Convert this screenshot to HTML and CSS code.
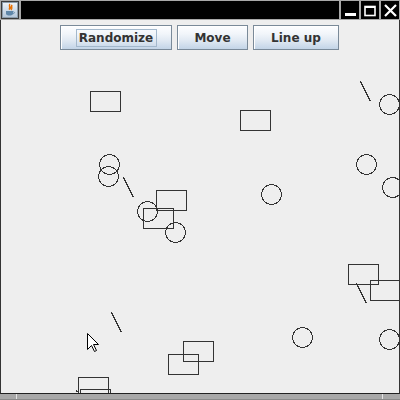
FILE: index.html
```html
<!DOCTYPE html>
<html>
<head>
<meta charset="utf-8">
<link rel="stylesheet" href="styles.css">
</head>
<body>
<div class="window">
  <div class="titlebar">
    <div class="cell icon-cell">
      <svg width="18" height="18" viewBox="0 0 18 18">
        <defs>
          <linearGradient id="tile" x1="0" y1="0" x2="0" y2="1">
            <stop offset="0" stop-color="#eef3f8"/>
            <stop offset="1" stop-color="#b3c6da"/>
          </linearGradient>
        </defs>
        <rect x="1.5" y="1.5" width="15" height="15" fill="url(#tile)" stroke="#8c9cab"/>
        <path d="M9 3 C7 5 10 6 8 8.5 C11 7 9 5.5 11 4 C10 6 12 6.5 10 9" fill="none" stroke="#e76f00" stroke-width="1.3"/>
        <path d="M5 10 H12 V12.5 C12 14 10.5 14.5 8.5 14.5 C6.5 14.5 5 14 5 12.5 Z" fill="#5f86a8"/>
        <path d="M12 10.8 C14 10.8 14 12.6 12 12.6" fill="none" stroke="#5f86a8" stroke-width="0.9"/>
      </svg>
    </div>
    <div class="cell title-cell"></div>
    <div class="cell ctrl">
      <svg width="18" height="18" viewBox="0 0 18 18"><rect x="4" y="12" width="11" height="3" fill="#fff"/></svg>
    </div>
    <div class="cell ctrl">
      <svg width="18" height="18" viewBox="0 0 18 18"><rect x="4" y="5.5" width="10" height="9" fill="none" stroke="#fff" stroke-width="1.6"/><rect x="4" y="5" width="10" height="2" fill="#fff"/></svg>
    </div>
    <div class="cell ctrl">
      <svg width="18" height="18" viewBox="0 0 18 18"><path d="M4 4 L15 15 M15 4 L4 15" stroke="#fff" stroke-width="2.2"/></svg>
    </div>
  </div>
  <div class="frame">
    <div class="toolbar">
      <button class="btn btn-random"><span class="focus">Randomize</span></button>
      <button class="btn btn-move">Move</button>
      <button class="btn btn-line">Line up</button>
    </div>
    <svg class="canvas" width="398" height="338" viewBox="1 55 398 338">
      <g fill="none" stroke="#333" stroke-width="1" shape-rendering="crispEdges">
        <rect x="90.5" y="91.5" width="30" height="20"/>
        <rect x="240.5" y="110.5" width="30" height="20"/>
        <rect x="156.5" y="190.5" width="30" height="20"/>
        <rect x="143.5" y="208.5" width="30" height="20"/>
        <rect x="348.5" y="264.5" width="30" height="20"/>
        <rect x="370.5" y="280.5" width="30" height="20"/>
        <rect x="183.5" y="341.5" width="30" height="20"/>
        <rect x="168.5" y="354.5" width="30" height="20"/>
        <rect x="78.5" y="377.5" width="30" height="20"/>
        <rect x="80.5" y="389.5" width="30" height="20"/>

        <circle cx="109.5" cy="164.5" r="10"/>
        <circle cx="108.5" cy="176.5" r="10"/>
        <circle cx="147.5" cy="211.5" r="10"/>
        <circle cx="175.5" cy="232.5" r="10"/>
        <circle cx="389.5" cy="104.5" r="10"/>
        <circle cx="366.5" cy="164.5" r="10"/>
        <circle cx="392.5" cy="187.5" r="10"/>
        <circle cx="271.5" cy="194.5" r="10"/>
        <circle cx="302.5" cy="337.5" r="10"/>
        <circle cx="389.5" cy="339.5" r="10"/>

        <line x1="123.5" y1="177.5" x2="133.5" y2="197.5"/>
        <line x1="360.5" y1="81.5" x2="370.5" y2="101.5"/>
        <line x1="356.5" y1="283.5" x2="366.5" y2="303.5"/>
        <line x1="111.5" y1="312.5" x2="121.5" y2="332.5"/>
        <line x1="76.5" y1="390.5" x2="77.5" y2="392.5"/>
      </g>
      <path class="cursor" d="M87.5 333.5 L87.5 349.5 L91.5 345.5 L94.5 351.5 L96.5 350.5 L93.5 344.5 L98.5 344.5 Z" fill="#fff" stroke="#000" stroke-width="1" stroke-linejoin="miter"/>
    </svg>
  </div>
  <div class="bottom">
    <div class="seg seg-left"></div>
    <div class="seg seg-mid"></div>
    <div class="seg seg-right"></div>
  </div>
</div>
</body>
</html>
```
FILE: styles.css
```css
* { box-sizing: border-box; }
html, body { margin: 0; padding: 0; }
body { width: 400px; height: 400px; overflow: hidden; background: #eeeeee; }

.window {
  width: 400px;
  height: 400px;
  display: flex;
  flex-direction: column;
}

.titlebar {
  height: 20px;
  display: flex;
  background: #000;
}
.cell {
  height: 20px;
  border: 1px solid #a8a8a8;
  background: #000;
  display: flex;
  align-items: center;
  justify-content: center;
}
.icon-cell { width: 20px; background: #3a3a3a; }
.title-cell { width: 320px; }
.ctrl { width: 20px; }

.frame {
  height: 374px;
  border-left: 1px solid #333;
  border-right: 1px solid #333;
  border-bottom: 1px solid #222;
  background: #eeeeee;
  display: flex;
  flex-direction: column;
}

.toolbar {
  height: 35px;
  padding: 5px 0 0 59px;
  display: flex;
  justify-content: flex-start;
  align-items: flex-start;
  gap: 5px;
}

.btn {
  height: 25px;
  padding: 0;
  margin: 0;
  border: 1px solid #7a8a99;
  border-radius: 0;
  background: linear-gradient(to bottom, #fdfeff 0%, #f1f5fa 35%, #dfe8f2 65%, #c3d4e7 100%);
  box-shadow: inset 1px 1px 0 #ffffff;
  font: bold 12px "DejaVu Sans", sans-serif;
  color: #333333;
  display: flex;
  align-items: center;
  justify-content: center;
}
.btn-random { width: 112px; }
.btn-move { width: 71px; }
.btn-line { width: 86px; }

.focus {
  display: flex;
  align-items: center;
  justify-content: center;
  width: 81px;
  height: 18px;
  border: 1px solid #a3b8cc;
}

.canvas {
  display: block;
  width: 398px;
  height: 338px;
}

.bottom {
  height: 6px;
  display: flex;
  background: #a8a8a8;
  border-bottom: 1px solid #8a8a8a;
}
.seg { height: 5px; }
.seg-left { width: 16px; }
.seg-mid { width: 366px; border-left: 1px solid #e4e4e4; }
.seg-right { width: 18px; border-left: 1px solid #e4e4e4; }
```
